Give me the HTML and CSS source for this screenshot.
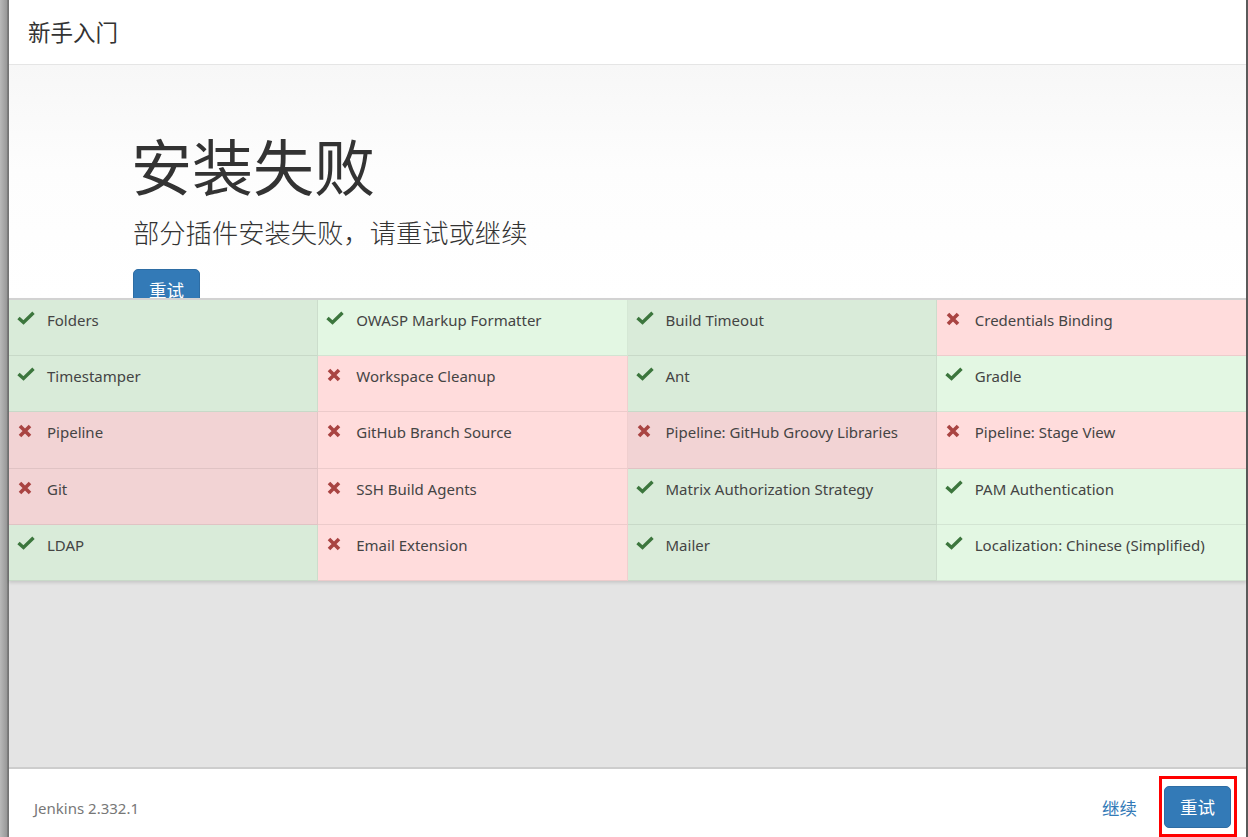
FILE: index.html
```html
<!DOCTYPE html>
<html lang="zh-CN">
<head>
<meta charset="utf-8">
<title>新手入门</title>
<link rel="stylesheet" href="styles.css">
</head>
<body>
<div class="frame">
  <div class="backdrop-edge"></div>
  <div class="modal">
    <div class="modal-header">
      <h4 class="modal-title">新手入门</h4>
    </div>
    <div class="modal-body">
      <div class="jumbotron">
        <h1 class="jumbo-title">安装失败</h1>
        <p class="jumbo-sub">部分插件安装失败，请重试或继续</p>
        <button class="btn btn-primary">重试</button>
      </div>
      <div class="plugins">
        <div class="plugin ok"><span class="icon"><svg viewBox="0 0 18 14" width="18" height="14"><path d="M1.5 7 L6.5 11.5 L16.5 1.8" fill="none" stroke="currentColor" stroke-width="3.4"/></svg></span><span class="name">Folders</span></div>
        <div class="plugin ok"><span class="icon"><svg viewBox="0 0 18 14" width="18" height="14"><path d="M1.5 7 L6.5 11.5 L16.5 1.8" fill="none" stroke="currentColor" stroke-width="3.4"/></svg></span><span class="name">OWASP Markup Formatter</span></div>
        <div class="plugin ok"><span class="icon"><svg viewBox="0 0 18 14" width="18" height="14"><path d="M1.5 7 L6.5 11.5 L16.5 1.8" fill="none" stroke="currentColor" stroke-width="3.4"/></svg></span><span class="name">Build Timeout</span></div>
        <div class="plugin fail"><span class="icon"><svg viewBox="0 0 14 14" width="14" height="14"><path d="M2 2 L12 12 M12 2 L2 12" fill="none" stroke="currentColor" stroke-width="3.6"/></svg></span><span class="name">Credentials Binding</span></div>

        <div class="plugin ok"><span class="icon"><svg viewBox="0 0 18 14" width="18" height="14"><path d="M1.5 7 L6.5 11.5 L16.5 1.8" fill="none" stroke="currentColor" stroke-width="3.4"/></svg></span><span class="name">Timestamper</span></div>
        <div class="plugin fail"><span class="icon"><svg viewBox="0 0 14 14" width="14" height="14"><path d="M2 2 L12 12 M12 2 L2 12" fill="none" stroke="currentColor" stroke-width="3.6"/></svg></span><span class="name">Workspace Cleanup</span></div>
        <div class="plugin ok"><span class="icon"><svg viewBox="0 0 18 14" width="18" height="14"><path d="M1.5 7 L6.5 11.5 L16.5 1.8" fill="none" stroke="currentColor" stroke-width="3.4"/></svg></span><span class="name">Ant</span></div>
        <div class="plugin ok"><span class="icon"><svg viewBox="0 0 18 14" width="18" height="14"><path d="M1.5 7 L6.5 11.5 L16.5 1.8" fill="none" stroke="currentColor" stroke-width="3.4"/></svg></span><span class="name">Gradle</span></div>

        <div class="plugin fail"><span class="icon"><svg viewBox="0 0 14 14" width="14" height="14"><path d="M2 2 L12 12 M12 2 L2 12" fill="none" stroke="currentColor" stroke-width="3.6"/></svg></span><span class="name">Pipeline</span></div>
        <div class="plugin fail"><span class="icon"><svg viewBox="0 0 14 14" width="14" height="14"><path d="M2 2 L12 12 M12 2 L2 12" fill="none" stroke="currentColor" stroke-width="3.6"/></svg></span><span class="name">GitHub Branch Source</span></div>
        <div class="plugin fail"><span class="icon"><svg viewBox="0 0 14 14" width="14" height="14"><path d="M2 2 L12 12 M12 2 L2 12" fill="none" stroke="currentColor" stroke-width="3.6"/></svg></span><span class="name">Pipeline: GitHub Groovy Libraries</span></div>
        <div class="plugin fail"><span class="icon"><svg viewBox="0 0 14 14" width="14" height="14"><path d="M2 2 L12 12 M12 2 L2 12" fill="none" stroke="currentColor" stroke-width="3.6"/></svg></span><span class="name">Pipeline: Stage View</span></div>

        <div class="plugin fail"><span class="icon"><svg viewBox="0 0 14 14" width="14" height="14"><path d="M2 2 L12 12 M12 2 L2 12" fill="none" stroke="currentColor" stroke-width="3.6"/></svg></span><span class="name">Git</span></div>
        <div class="plugin fail"><span class="icon"><svg viewBox="0 0 14 14" width="14" height="14"><path d="M2 2 L12 12 M12 2 L2 12" fill="none" stroke="currentColor" stroke-width="3.6"/></svg></span><span class="name">SSH Build Agents</span></div>
        <div class="plugin ok"><span class="icon"><svg viewBox="0 0 18 14" width="18" height="14"><path d="M1.5 7 L6.5 11.5 L16.5 1.8" fill="none" stroke="currentColor" stroke-width="3.4"/></svg></span><span class="name">Matrix Authorization Strategy</span></div>
        <div class="plugin ok"><span class="icon"><svg viewBox="0 0 18 14" width="18" height="14"><path d="M1.5 7 L6.5 11.5 L16.5 1.8" fill="none" stroke="currentColor" stroke-width="3.4"/></svg></span><span class="name">PAM Authentication</span></div>

        <div class="plugin ok"><span class="icon"><svg viewBox="0 0 18 14" width="18" height="14"><path d="M1.5 7 L6.5 11.5 L16.5 1.8" fill="none" stroke="currentColor" stroke-width="3.4"/></svg></span><span class="name">LDAP</span></div>
        <div class="plugin fail"><span class="icon"><svg viewBox="0 0 14 14" width="14" height="14"><path d="M2 2 L12 12 M12 2 L2 12" fill="none" stroke="currentColor" stroke-width="3.6"/></svg></span><span class="name">Email Extension</span></div>
        <div class="plugin ok"><span class="icon"><svg viewBox="0 0 18 14" width="18" height="14"><path d="M1.5 7 L6.5 11.5 L16.5 1.8" fill="none" stroke="currentColor" stroke-width="3.4"/></svg></span><span class="name">Mailer</span></div>
        <div class="plugin ok"><span class="icon"><svg viewBox="0 0 18 14" width="18" height="14"><path d="M1.5 7 L6.5 11.5 L16.5 1.8" fill="none" stroke="currentColor" stroke-width="3.4"/></svg></span><span class="name">Localization: Chinese (Simplified)</span></div>
      </div>
      <div class="filler"></div>
    </div>
    <div class="modal-footer">
      <span class="version">Jenkins 2.332.1</span>
      <div class="actions">
        <a class="btn-link" href="#">继续</a>
        <span class="highlight"><button class="btn btn-primary">重试</button></span>
      </div>
    </div>
  </div>
  <div class="right-edge"></div>
</div>
</body>
</html>
```

FILE: styles.css
```css
* { box-sizing: border-box; }

html, body {
  margin: 0;
  padding: 0;
  height: 100%;
  overflow: hidden;
}

body {
  font-family: "Noto Sans", "Noto Sans CJK SC", sans-serif;
  color: #333;
  background: #888;
}

.frame {
  display: flex;
  height: 837px;
  width: 1248px;
}

.backdrop-edge {
  width: 9px;
  flex: none;
  background: linear-gradient(to right, #b9b9b9, #999 75%, #6e6e6e 88%, #7a7a7a);
}

.right-edge {
  width: 2px;
  flex: none;
  background: #5a5a5a;
}

.modal {
  flex: 1;
  display: flex;
  flex-direction: column;
  background: #fff;
  min-width: 0;
}

.modal-header {
  height: 65px;
  flex: none;
  border-bottom: 1px solid #e5e5e5;
  display: flex;
  align-items: center;
  padding-left: 19px;
}

.modal-title {
  margin: 0;
  font-family: "Noto Sans CJK SC", sans-serif;
  font-weight: 400;
  font-size: 22.5px;
  color: #333;
  line-height: 1;
  padding-bottom: 1px;
}

.modal-body {
  flex: 1;
  display: flex;
  flex-direction: column;
  background: #e4e4e4;
}

.jumbotron {
  height: 233px;
  flex: none;
  overflow: hidden;
  background: linear-gradient(to bottom, #f7f7f7, #fdfdfd 45%, #fff);
  padding: 66px 0 0 122px;
}

.jumbo-title {
  margin: 0;
  font-family: "Noto Sans CJK SC", sans-serif;
  font-weight: 400;
  font-size: 61px;
  line-height: 67px;
  color: #333;
}

.jumbo-sub {
  margin: 16px 0 0 2px;
  font-family: "Noto Sans CJK SC", sans-serif;
  font-size: 26.3px;
  line-height: 36px;
  color: #333;
  font-weight: 300;
}

.jumbotron .btn {
  margin: 19px 0 0 2px;
}

.btn {
  font-family: "Noto Sans CJK SC", sans-serif;
  font-size: 17.5px;
  line-height: 24px;
  padding: 8px 15px;
  border-radius: 5px;
  border: 1px solid #2e6da4;
  cursor: pointer;
}

.btn-primary {
  background: #337ab7;
  color: #fff;
}

.plugins {
  flex: none;
  display: grid;
  grid-template-columns: repeat(4, 1fr);
  border-top: 2px solid #d2d2d2;
  box-shadow: 0 2px 3px rgba(0, 0, 0, 0.12);
  position: relative;
}

.plugin {
  height: 56.2px;
  display: flex;
  align-items: flex-start;
  padding: 9px 8px 0 8px;
  font-size: 15px;
  line-height: 22px;
  color: #444;
  border-right: 1px solid rgba(0, 0, 0, 0.06);
  border-bottom: 1px solid rgba(0, 0, 0, 0.07);
}

.plugin:nth-child(4n) {
  border-right: none;
}

.plugin .icon {
  width: 30px;
  flex: none;
  display: flex;
  padding-top: 2px;
}

.plugin.ok .icon { color: #3c763d; }
.plugin.fail .icon { color: #a94442; }
.plugin.fail .icon svg { margin: 1px 0 0 1px; }

.plugin.ok { background: #e3f7e3; }
.plugin.fail { background: #ffdcdc; }
.plugin.ok:nth-child(odd) { background: #d9ebd9; }
.plugin.fail:nth-child(odd) { background: #f2d3d4; }

.plugin .name {
  white-space: nowrap;
}

.filler {
  flex: 1;
}

.modal-footer {
  height: 70px;
  flex: none;
  border-top: 2px solid #cdcdcd;
  display: flex;
  align-items: center;
  justify-content: space-between;
  padding: 8px 15px 0 25px;
}

.version {
  font-size: 15px;
  color: #777;
  padding-top: 2px;
}

.actions {
  display: flex;
  align-items: center;
  gap: 27px;
}

.btn-link {
  font-family: "Noto Sans CJK SC", sans-serif;
  font-size: 17.5px;
  color: #337ab7;
  text-decoration: none;
  padding-top: 1px;
}

.highlight {
  position: relative;
  display: inline-flex;
}

.highlight::after {
  content: "";
  position: absolute;
  top: -10px;
  left: -5px;
  right: -6px;
  bottom: -9px;
  border: 3px solid #f00;
  pointer-events: none;
}
```
